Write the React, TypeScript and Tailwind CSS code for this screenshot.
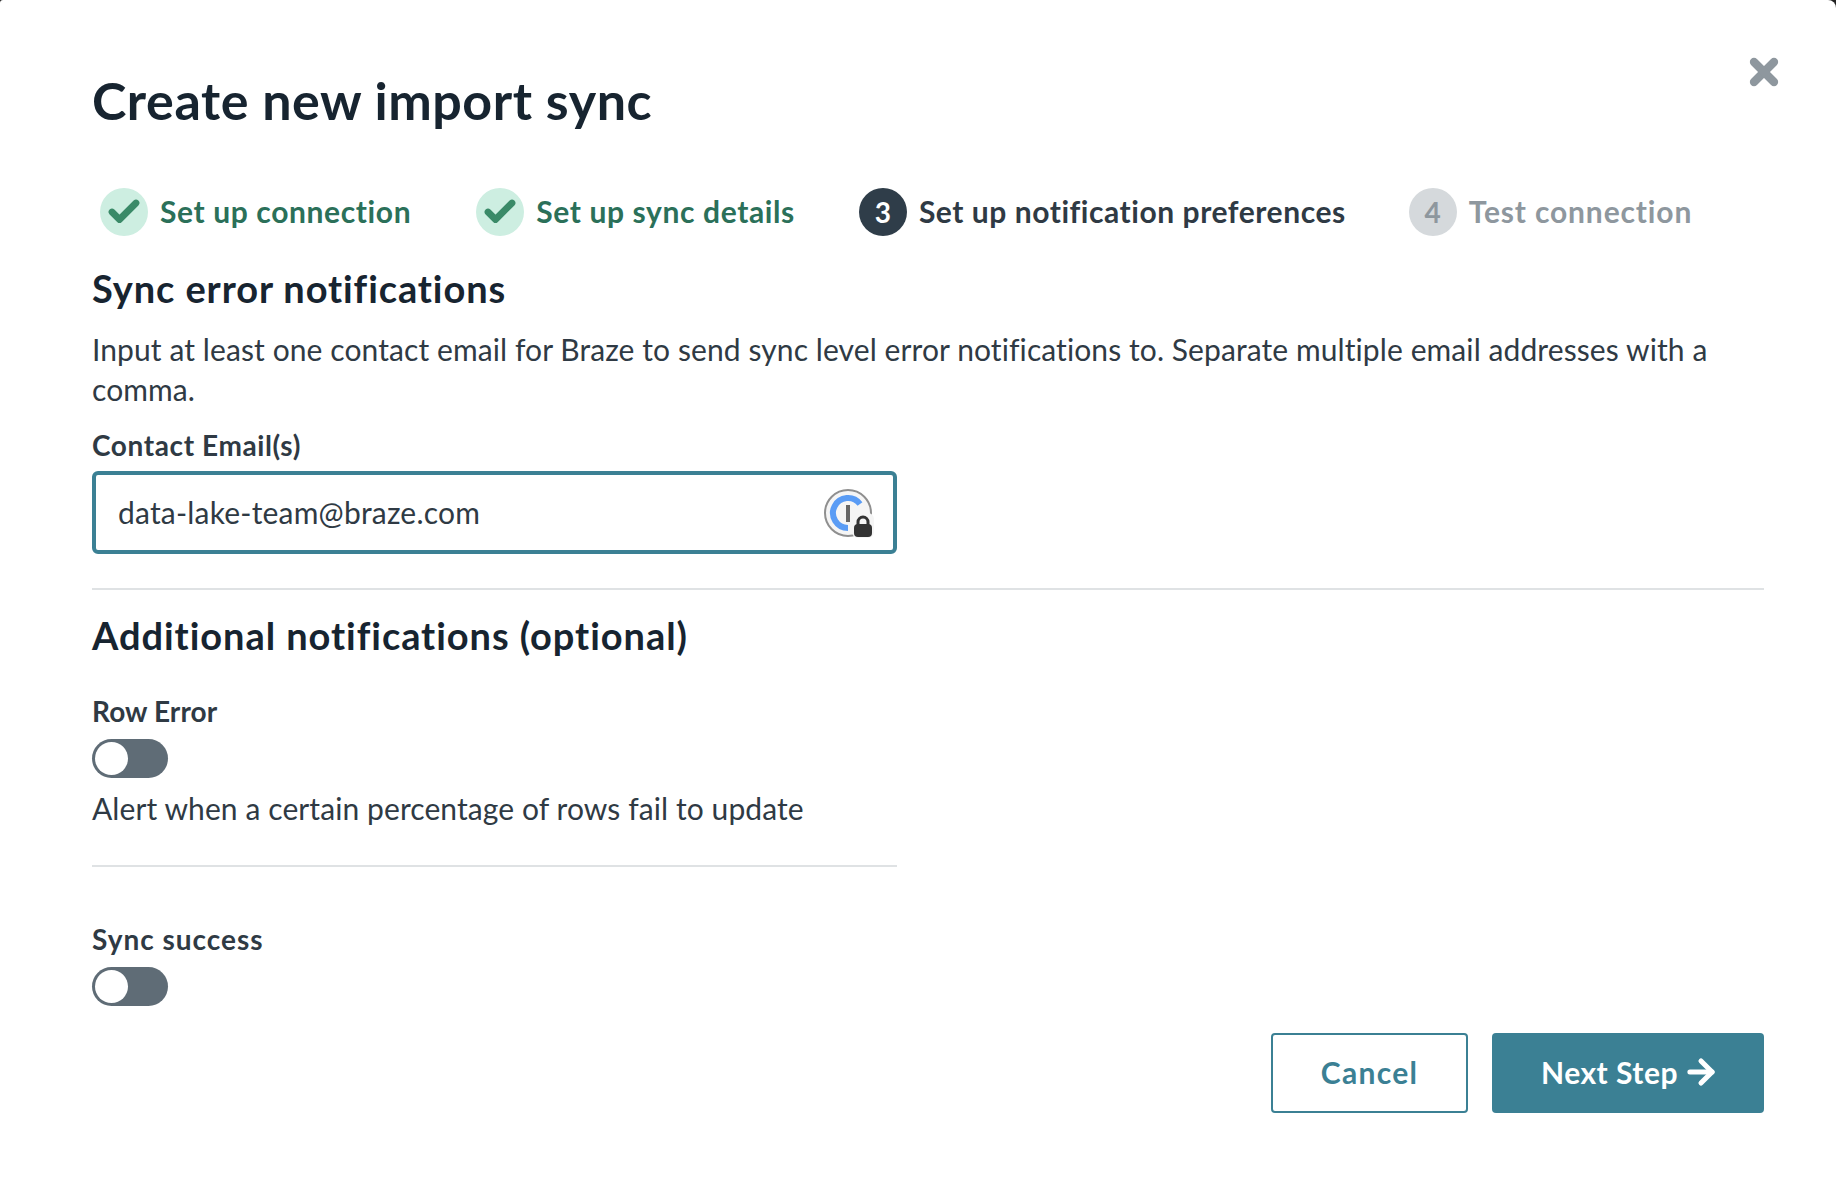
import { ArrowRight, Check, X } from 'lucide-react';

const font = { fontFamily: 'Lato, "Noto Sans", sans-serif' };

function Toggle() {
  return (
    <div className="w-[76px] h-[39px] rounded-full bg-[#5f6c76] p-[3px]">
      <div className="w-[33px] h-[33px] rounded-full bg-white" />
    </div>
  );
}

function DoneStep({ label, className }: { label: string; className: string }) {
  return (
    <div className={`flex items-center gap-3 ${className}`}>
      <div className="w-12 h-12 rounded-full bg-[#cdeee1] flex items-center justify-center">
        <Check size={36} strokeWidth={4.5} className="text-[#3a8a68]" />
      </div>
      <span className="text-[30px] tracking-[0.62px] font-bold text-[#2b7059] pb-[2px]">{label}</span>
    </div>
  );
}

function OnePassword() {
  return (
    <svg width="50" height="50" viewBox="0 0 50 50" className="shrink-0">
      <circle cx="24" cy="25" r="23" fill="#f5f5f5" stroke="#8f8f8f" strokeWidth="2" />
      <path d="M36 16 A15 15 0 1 0 24 40" fill="none" stroke="#5a9cf5" strokeWidth="6" />
      <rect x="22" y="17" width="4" height="17" fill="#666" />
      <rect x="28" y="25" width="22" height="25" rx="6" fill="#f5f5f5" />
      <path d="M34 37 v-3 a5 5 0 0 1 10 0 v3" fill="none" stroke="#333" strokeWidth="3" />
      <rect x="30" y="36" width="18" height="13" rx="4" fill="#333" />
    </svg>
  );
}

export default function App() {
  return (
    <div className="w-[1836px] h-[1180px] bg-[#222] overflow-hidden">
      <div style={font} className="relative h-full bg-white rounded-tr-[8px] rounded-tl-[3px] text-[#2f3a44] pl-[92px] pr-[72px] pt-[68px] tracking-[0.09px] [font-variant-ligatures:none]">
        <button className="absolute right-[52px] top-[52px] text-[#8e979e]">
          <X size={40} strokeWidth={5} />
        </button>

        <h1 className="text-[52px] leading-[64px] tracking-[0.55px] font-bold text-[#172430]">Create new import sync</h1>

        <div className="flex items-center mt-[56px] h-12">
          <DoneStep label="Set up connection" className="ml-2" />
          <DoneStep label="Set up sync details" className="ml-[65px]" />
          <div className="flex items-center gap-3 ml-[64px]">
            <div className="w-12 h-12 rounded-full bg-[#2f3d49] flex items-center justify-center text-white text-[28px] font-bold">3</div>
            <span className="text-[30px] tracking-[0.55px] font-bold text-[#2f3a44] pb-[2px]">Set up notification preferences</span>
          </div>
          <div className="flex items-center gap-3 ml-[63px]">
            <div className="w-12 h-12 rounded-full bg-[#d5d9dc] flex items-center justify-center text-[#8e979e] text-[28px] font-bold">4</div>
            <span className="text-[30px] tracking-[0.85px] font-bold text-[#8e979e] pb-[2px]">Test connection</span>
          </div>
        </div>

        <h2 className="text-[38px] leading-[48px] tracking-[0.9px] font-bold text-[#172430] mt-[28px]">Sync error notifications</h2>
        <p className="text-[30px] leading-[40px] mt-[17px] text-[#2f3a44]">
          Input at least one contact email for Braze to send sync level error notifications to. Separate multiple email addresses with a comma.
        </p>

        <div className="text-[28px] leading-[34px] tracking-[0.6px] font-bold mt-[19px]">Contact Email(s)</div>
        <div className="w-[805px] h-[83px] mt-[9px] rounded-[6px] border-[4px] border-[#3b8094] flex items-center justify-between pl-[22px] pr-[19px]">
          <span className="text-[30px] tracking-[0.2px]">data-lake-team@braze.com</span>
          <OnePassword />
        </div>

        <div className="h-[2px] bg-[#dfe2e4] mt-[34px]" />

        <h2 className="text-[38px] leading-[48px] tracking-[0.95px] font-bold text-[#172430] mt-[21px]">Additional notifications (optional)</h2>

        <div className="text-[28px] leading-[34px] font-bold mt-[35px]">Row Error</div>
        <div className="mt-[11px]"><Toggle /></div>
        <p className="text-[30px] leading-[40px] mt-[10px]">Alert when a certain percentage of rows fail to update</p>

        <div className="w-[805px] h-[2px] bg-[#dfe2e4] mt-[37px]" />

        <div className="text-[28px] leading-[34px] tracking-[1px] font-bold mt-[55px]">Sync success</div>
        <div className="mt-[11px]"><Toggle /></div>

        <div className="flex justify-end gap-6 mt-[27px]">
          <button className="w-[197px] h-[80px] rounded-[4px] border-2 border-[#3b8094] text-[#3b8094] text-[30px] tracking-[1.3px] font-bold pb-[2px]">Cancel</button>
          <button className="w-[272px] h-[80px] rounded-[4px] bg-[#3b8094] text-white text-[30px] tracking-[0.5px] font-bold flex items-center justify-center gap-1 pl-[5px] pb-[2px]">
            Next Step <ArrowRight size={38} strokeWidth={3.2} />
          </button>
        </div>
      </div>
    </div>
  );
}
